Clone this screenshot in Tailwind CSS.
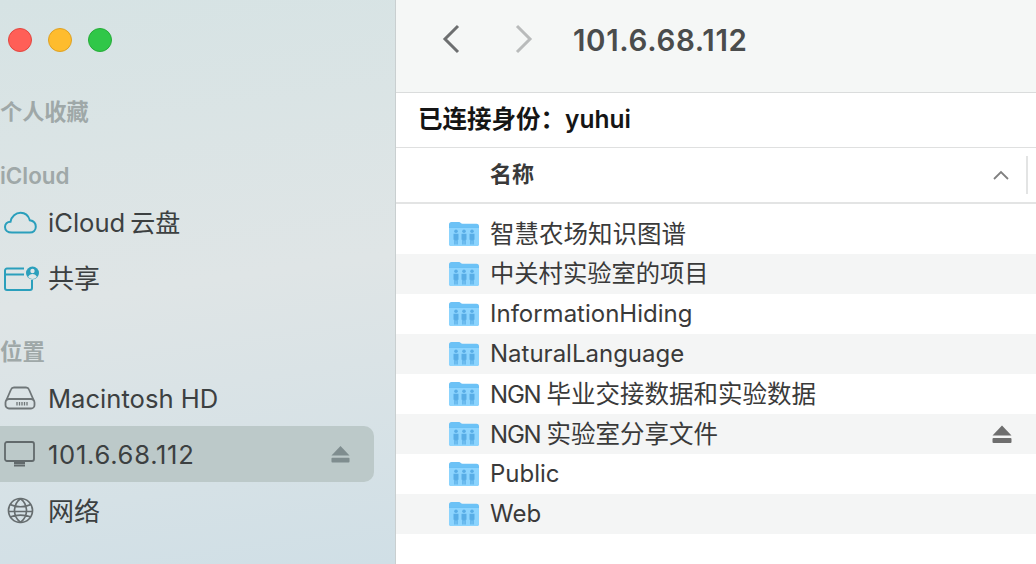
<!DOCTYPE html>
<html lang="zh">
<head>
  <meta charset="UTF-8" />
  <title>101.6.68.112</title>
  <script src="https://cdn.jsdelivr.net/npm/@tailwindcss/browser@4"></script>
</head>
<body class="w-[1036px] h-[564px] overflow-hidden bg-white font-['Inter','Noto_Sans_CJK_SC',sans-serif]">
  <svg class="hidden">
    <symbol id="folder" viewBox="0 0 32 26">
      <path d="M1 3.500A2.500 2.500 0 0 1 3.500 1h7.500c1.500 0 2 1.800 3.500 1.800H28.500A2.500 2.500 0 0 1 31 5.300V22.500A2.500 2.500 0 0 1 28.500 25H3.500A2.500 2.500 0 0 1 1 22.500Z" fill="#6cc2f6"/>
      <path d="M1 6.500H31V22.500A2.500 2.500 0 0 1 28.500 25H3.500A2.500 2.500 0 0 1 1 22.500Z" fill="#8cd4fe"/>
      <path d="M1 6.500H31" stroke="#66bcf2" stroke-width=".8"/>
      <g fill="#58ade6">
        <circle cx="8" cy="10.200" r="1.800"/><path d="M5.500 12.800h5v6h-.8v4.700H8.400v-4H7.600v4H6.300v-4.700h-.8Z"/>
        <circle cx="16" cy="10.200" r="1.800"/><path d="M13.500 12.800h5v6h-.8v4.700h-1.300v-4h-.8v4h-1.300v-4.700h-.8Z"/>
        <circle cx="24" cy="10.200" r="1.800"/><path d="M21.500 12.800h5v6h-.8v4.700h-1.300v-4h-.8v4h-1.300v-4.700h-.8Z"/>
      </g>
    </symbol>
    <symbol id="eject" viewBox="0 0 20 18">
      <path d="M10 0.500L19.500 10.500H.5Z" fill="currentColor"/>
      <rect x=".5" y="13" width="19" height="5" rx="1" fill="currentColor"/>
    </symbol>
  </svg>

  <div class="flex h-full">
    <!-- sidebar -->
    <aside class="w-[396px] h-full shrink-0 border-r border-[#c9cfd0] flex flex-col text-[#3c4041] bg-[linear-gradient(172deg,#d6e3e4_0%,#dfe5e6_50%,#d0dfe6_100%)]">
      <div class="flex gap-4 pl-2 pt-7">
        <span class="size-6 rounded-full bg-[#ff5f57] border border-[#e2463f]"></span>
        <span class="size-6 rounded-full bg-[#febc2e] border border-[#dea123]"></span>
        <span class="size-6 rounded-full bg-[#30c748] border border-[#25ac38]"></span>
      </div>

      <div class="mt-[47px] h-[26px] leading-[26px] text-[22.200px] font-semibold text-[#9fa8a8]">个人收藏</div>
      <div class="mt-[38px] h-[26px] leading-[26px] text-[22.400px] font-semibold text-[#9fa8a8]">iCloud</div>

      <div class="mt-[6px] h-[56px] flex items-center text-[25.600px]">
        <svg class="w-[34px] h-[24px] ml-[3px] mr-[11px]" viewBox="0 0 34 24" fill="none" stroke="#2a9fbc" stroke-width="2"><path d="M9 21.500C4.500 21.500 2 19 2 16c0-3 2.200-5.200 5.500-5.300C8.500 5.500 12.800 1.800 17.500 1.800c4.800 0 8 3 9.300 7.500 3.800.6 6 3.200 6 6.500 0 3.400-2.400 5.700-6 5.700Z"/></svg>
        <span class="pt-[1px]">iCloud<span class="ml-[5px] text-[25px]">云盘</span></span>
      </div>
      <div class="h-[56px] flex items-center text-[26px]">
        <svg class="w-[36px] h-[26px] ml-[3px] mr-[9px]" viewBox="0 0 36 26" fill="none"><path d="M21 2.500H4A2 2 0 0 0 2 4.500V22A2 2 0 0 0 4 24H27a2 2 0 0 0 2-2V14M2 8.500H21" stroke="#2a9fbc" stroke-width="2"/><circle cx="29.500" cy="7" r="6.500" fill="#2a9fbc"/><circle cx="29.500" cy="5" r="2.200" fill="#dfe6e7"/><path d="M25 11c1-2 2.500-3 4.500-3s3.500 1 4.500 3a6 6 0 0 1-9 0Z" fill="#dfe6e7"/></svg>
        <span class="-mt-[1px]">共享</span>
      </div>

      <div class="mt-[32px] h-[26px] leading-[26px] text-[22.400px] font-semibold text-[#9fa8a8]">位置</div>

      <div class="mt-[5px] h-[56px] flex items-center text-[25.600px]">
        <svg class="w-[32px] h-[24px] ml-[4px] mr-[12px]" viewBox="0 0 32 24" fill="none" stroke="#6f7678" stroke-width="1.800"><path d="M2 15L7 3.500C7.500 2.200 8.500 1.500 10 1.500H22c1.500 0 2.500.7 3 2L30 15"/><rect x="1.500" y="13" width="29" height="9.500" rx="3.500"/><path d="M13 16v3.500M15.500 16v3.500M18 16v3.500M20.500 16v3.500M23 16v3.500" stroke-width="1.300"/></svg>
        <span class="pt-[2px]">Macintosh HD</span>
      </div>
      <div class="w-[374px] h-[56px] flex items-center text-[25.600px] bg-[#bcc9c9] rounded-r-[10px]">
        <svg class="w-[32px] h-[26px] ml-[4px] mr-[12px]" viewBox="0 0 32 26" fill="none"><rect x="1" y="1" width="29" height="19" rx="2" stroke="#626a6c" stroke-width="1.800"/><path d="M10 20.500h11v3H10ZM10 24h11v1.500H10Z" fill="#626a6c"/></svg>
        <span class="pt-[3px] tracking-[0.700px]">101.6.68.112</span>
        <svg class="ml-auto mr-[24px] w-[19px] h-[18px] text-[#7f8d8f]"><use href="#eject"/></svg>
      </div>
      <div class="h-[56px] flex items-center text-[26px]">
        <svg class="w-[27px] h-[27px] ml-[7px] mr-[14px]" viewBox="0 0 27 27" fill="none" stroke="#666d6f" stroke-width="1.700"><circle cx="13.500" cy="13.500" r="12"/><path d="M13.500 1.500c-5 4-6 8-6 12s1 8 6 12M13.500 1.500c5 4 6 8 6 12s-1 8-6 12M3 7.500c6 3 15 3 21 0M1.500 14.500h24M3 20c6-2.500 15-2.500 21 0"/></svg>
        <span class="pt-[2px]">网络</span>
      </div>
    </aside>

    <!-- main pane -->
    <main class="flex-1 min-w-0 flex flex-col text-[#2d2d2d]">
      <header class="h-[93px] shrink-0 bg-[#f5f7f6] border-b border-[#dadcdc] flex items-start pt-[24px]">
        <svg class="ml-[46px] w-[18px] h-[30px]" viewBox="0 0 18 30" fill="none" stroke="#6d6f70" stroke-width="3"><path d="M16 2L3 15l13 13"/></svg>
        <svg class="ml-[55px] w-[18px] h-[30px]" viewBox="0 0 18 30" fill="none" stroke="#b9bbbb" stroke-width="3"><path d="M2 2l13 13L2 28"/></svg>
        <h1 class="ml-[40px] text-[29.500px] leading-[32px] font-semibold tracking-[0.650px] text-[#4a4c4c]">101.6.68.112</h1>
      </header>

      <div class="h-[55px] shrink-0 border-b border-[#dfe0e0] flex items-center pl-[22px] text-[24.500px] font-semibold text-[#151515]"><span class="-mt-[1px]">已连接身份：yuhui</span></div>

      <div class="h-[56px] shrink-0 border-b-2 border-[#e3e4e4] flex items-center pl-[94px] text-[22px] font-semibold text-[#3a3a3a]">
        <span class="-mt-[2px]">名称</span>
        <svg class="ml-auto w-[16px] h-[10px]" viewBox="0 0 16 10" fill="none" stroke="#808080" stroke-width="1.800"><path d="M1 9l7-7 7 7"/></svg>
        <span class="ml-[17px] w-[2px] h-[38px] bg-[#e3e4e4]"></span>
        <span class="w-[8px]"></span>
      </div>

      <ul class="pt-[10px] text-[24px] text-[#3a3a3a]">
        <li class="h-[40px] flex items-center pl-[52px] gap-[10px]"><svg class="w-[32px] h-[26px]"><use href="#folder"/></svg><span class="text-[24.500px]">智慧农场知识图谱</span></li>
        <li class="h-[40px] flex items-center pl-[52px] gap-[10px] bg-[#f4f5f5]"><svg class="w-[32px] h-[26px]"><use href="#folder"/></svg><span class="text-[24.300px] -mt-[1px]">中关村实验室的项目</span></li>
        <li class="h-[40px] flex items-center pl-[52px] gap-[10px]"><svg class="w-[32px] h-[26px]"><use href="#folder"/></svg><span>InformationHiding</span></li>
        <li class="h-[40px] flex items-center pl-[52px] gap-[10px] bg-[#f4f5f5]"><svg class="w-[32px] h-[26px]"><use href="#folder"/></svg><span>NaturalLanguage</span></li>
        <li class="h-[40px] flex items-center pl-[52px] gap-[10px]"><svg class="w-[32px] h-[26px]"><use href="#folder"/></svg><span class="tracking-[-1.200px]">NGN<span class="ml-[6px] text-[24.500px] tracking-normal">毕业交接数据和实验数据</span></span></li>
        <li class="h-[40px] flex items-center pl-[52px] gap-[10px] bg-[#f4f5f5]"><svg class="w-[32px] h-[26px]"><use href="#folder"/></svg><span class="tracking-[-1.200px]">NGN<span class="ml-[6px] text-[24.500px] tracking-normal">实验室分享文件</span></span><svg class="ml-auto mr-[24px] w-[20px] h-[18px] text-[#6e6e6e]"><use href="#eject"/></svg></li>
        <li class="h-[40px] flex items-center pl-[52px] gap-[10px]"><svg class="w-[32px] h-[26px]"><use href="#folder"/></svg><span>Public</span></li>
        <li class="h-[40px] flex items-center pl-[52px] gap-[10px] bg-[#f4f5f5]"><svg class="w-[32px] h-[26px]"><use href="#folder"/></svg><span>Web</span></li>
      </ul>
    </main>
  </div>
</body>
</html>
